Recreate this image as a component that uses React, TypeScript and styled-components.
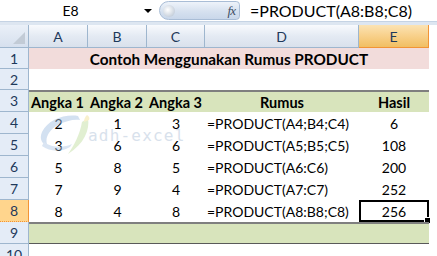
import * as React from 'react';
import styled, { createGlobalStyle, css } from 'styled-components';

const GlobalStyle = createGlobalStyle`
  html, body {
    margin: 0;
    padding: 0;
    background: #ffffff;
    overflow: hidden;
  }
  body {
    font-family: Lato, "Open Sans", sans-serif;
    font-size: 14px;
    color: #000;
  }
`;

const FONT = `Lato, "Open Sans", sans-serif`;

const Page = styled.div`
  width: 437px;
  height: 256px;
  position: relative;
  overflow: hidden;
  background: #ffffff;
`;

const FormulaBar = styled.div`
  display: flex;
  align-items: center;
  height: 21px;
  background: #ffffff;
`;

const NameBox = styled.div`
  position: relative;
  width: 159px;
  height: 21px;
  display: flex;
  align-items: center;
  justify-content: center;
  padding-right: 18px;
  box-sizing: border-box;
  font-family: ${FONT};
  font-size: 14px;
`;

const DropArrow = styled.span`
  position: absolute;
  right: 7px;
  top: 9px;
  width: 0;
  height: 0;
  border-left: 4px solid transparent;
  border-right: 4px solid transparent;
  border-top: 4px solid #000;
`;

const FxPill = styled.div`
  width: 81px;
  height: 19px;
  box-sizing: border-box;
  border: 1px solid #a9bdd6;
  border-radius: 10px 4px 4px 10px;
  background: linear-gradient(#eef3fa, #d6e1ef 55%, #c9d7ea);
  display: flex;
  align-items: center;
  justify-content: space-between;
  padding: 0 4px 0 3px;
`;

const Knob = styled.span`
  width: 12px;
  height: 12px;
  border-radius: 50%;
  background: radial-gradient(circle at 40% 40%, #ffffff, #c9d2dd 70%, #aeb9c7);
`;

const Fx = styled.span`
  font-family: "Liberation Serif", serif;
  font-style: italic;
  font-size: 13px;
  color: #3d4d63;
  letter-spacing: -1px;
`;

const FormulaText = styled.div`
  flex: 1;
  padding-left: 10px;
  font-family: ${FONT};
  font-size: 16px;
`;

const Band = styled.div`
  height: 4px;
  background: #dde6f1;
  border-top: 1px solid #c5d3e4;
  box-sizing: border-box;
`;

const Row = styled.div<{ $h: number }>`
  display: grid;
  grid-template-columns: 29px 400px 1fr;
  height: ${p => p.$h}px;
`;

const Corner = styled.div`
  position: relative;
  background: linear-gradient(#eaf0f8, #d6e0ee);
  border-right: 1px solid #9eb6ce;
  border-bottom: 1px solid #9eb6ce;
  box-sizing: border-box;
  &::after {
    content: '';
    position: absolute;
    right: 3px;
    bottom: 3px;
    width: 0;
    height: 0;
    border-left: 12px solid transparent;
    border-bottom: 12px solid #c2cbd6;
  }
`;

const Cols = styled.div<{ $fill?: string; $top?: string; $bottom?: string }>`
  display: grid;
  grid-template-columns: 59px 59px 58px 154px 70px;
  background: ${p => p.$fill || '#ffffff'};
  box-sizing: border-box;
  ${p => p.$top && css`border-top: ${p.$top};`}
  ${p => p.$bottom && css`border-bottom: ${p.$bottom};`}
  position: relative;
`;

const ColHead = styled.div<{ $sel?: boolean }>`
  display: flex;
  align-items: center;
  justify-content: center;
  font-family: ${FONT};
  font-size: 14px;
  color: #1e395b;
  box-sizing: border-box;
  border-right: 1px solid #9eb6ce;
  border-bottom: 1px solid #9eb6ce;
  background: linear-gradient(#f8fafd, #e4eaf3 50%, #d9e1ec);
  ${p => p.$sel && css`
    background: linear-gradient(#fbe3b4, #f8d08a 50%, #f1bf63);
    border-right: 1px solid #f29436;
    border-bottom: 1px solid #f29436;
  `}
`;

const RowHead = styled.div<{ $sel?: boolean }>`
  display: flex;
  align-items: center;
  justify-content: center;
  font-family: ${FONT};
  font-size: 14px;
  color: #1e395b;
  background: #e4ecf7;
  border-right: 1px solid #9eb6ce;
  border-bottom: 1px solid #9eb6ce;
  box-sizing: border-box;
  ${p => p.$sel && css`
    background: #ffd58d;
    border-right: 1px solid #f29436;
    border-bottom: 1px dotted #f29436;
  `}
`;

const Filler = styled.div`
  background: #ffffff;
`;

const Cell = styled.div<{ $align?: 'left' | 'center'; $bold?: boolean; $sel?: boolean }>`
  display: flex;
  align-items: center;
  justify-content: ${p => (p.$align === 'left' ? 'flex-start' : 'center')};
  padding-left: ${p => (p.$align === 'left' ? '2px' : '0')};
  font-family: ${FONT};
  font-size: ${p => (p.$bold ? '14.5px' : '14px')};
  font-weight: ${p => (p.$bold ? 700 : 400)};
  white-space: nowrap;
  box-sizing: border-box;
  position: relative;
  ${p => p.$sel && css`
    border: 2px solid #000;
    &::after {
      content: '';
      position: absolute;
      right: -4px;
      bottom: -4px;
      width: 5px;
      height: 5px;
      background: #000;
      border: 1px solid #fff;
    }
  `}
`;

const Title = styled.div`
  grid-column: 1 / 6;
  display: flex;
  align-items: center;
  justify-content: center;
  font-family: ${FONT};
  font-size: 15.3px;
  font-weight: 700;
`;

// faded "adh-excel" logo lying over rows 4-5
const Watermark = styled.div`
  position: absolute;
  left: 34px;
  top: 112px;
  display: flex;
  align-items: flex-end;
  pointer-events: none;
  opacity: 0.5;
`;

const MarkText = styled.span`
  font-family: "DejaVu Sans Mono", monospace;
  font-size: 16px;
  letter-spacing: 1.2px;
  color: #b3c5da;
  margin-left: -8px;
  margin-bottom: 13px;
`;

const data = [
  { n: 4, a: 2, b: 1, c: 3, f: '=PRODUCT(A4;B4;C4)', r: 6 },
  { n: 5, a: 3, b: 6, c: 6, f: '=PRODUCT(A5;B5;C5)', r: 108 },
  { n: 6, a: 5, b: 8, c: 5, f: '=PRODUCT(A6:C6)', r: 200 },
  { n: 7, a: 7, b: 9, c: 4, f: '=PRODUCT(A7:C7)', r: 252 },
  { n: 8, a: 8, b: 4, c: 8, f: '=PRODUCT(A8:B8;C8)', r: 256 },
];

export default function App() {
  return (
    <Page>
      <GlobalStyle />
      <FormulaBar>
        <NameBox>
          E8
          <DropArrow />
        </NameBox>
        <FxPill>
          <Knob />
          <Fx>fx</Fx>
        </FxPill>
        <FormulaText>=PRODUCT(A8:B8;C8)</FormulaText>
      </FormulaBar>
      <Band />
      <Row $h={23}>
        <Corner />
        <Cols>
          {['A', 'B', 'C', 'D', 'E'].map(c => (
            <ColHead key={c} $sel={c === 'E'}>{c}</ColHead>
          ))}
        </Cols>
        <Filler />
      </Row>
      <Row $h={21}>
        <RowHead>1</RowHead>
        <Cols $fill="#f2dcdb">
          <Title>Contoh Menggunakan Rumus PRODUCT</Title>
        </Cols>
        <Filler />
      </Row>
      <Row $h={21}>
        <RowHead>2</RowHead>
        <Cols />
        <Filler />
      </Row>
      <Row $h={22}>
        <RowHead>3</RowHead>
        <Cols $fill="#d8e4bc" $top="2px solid #7f7f7f">
          <Cell $align="left" $bold>Angka 1</Cell>
          <Cell $align="left" $bold>Angka 2</Cell>
          <Cell $align="left" $bold>Angka 3</Cell>
          <Cell $bold>Rumus</Cell>
          <Cell $bold>Hasil</Cell>
        </Cols>
        <Filler />
      </Row>
      {data.map(d => (
        <Row $h={22} key={d.n}>
          <RowHead $sel={d.n === 8}>{d.n}</RowHead>
          <Cols>
            <Cell>{d.a}</Cell>
            <Cell>{d.b}</Cell>
            <Cell>{d.c}</Cell>
            <Cell $align="left">{d.f}</Cell>
            <Cell $sel={d.n === 8}>{d.r}</Cell>
          </Cols>
          <Filler />
        </Row>
      ))}
      <Row $h={22}>
        <RowHead>9</RowHead>
        <Cols $fill="#d8e4bc" $top="2px solid #7f7f7f" $bottom="1px solid #595959" />
        <Filler />
      </Row>
      <Row $h={22}>
        <RowHead>10</RowHead>
        <Cols />
        <Filler />
      </Row>
      <Watermark>
        <svg width="62" height="46" viewBox="0 0 62 46">
          <path d="M44 4 C30 2 14 8 8 20 C5 27 8 32 14 34 C10 28 14 18 24 13 C31 9 40 7 46 8 Z" fill="#a9c4e4" />
          <path d="M10 30 C18 36 30 36 38 32 L36 35 C28 40 16 40 8 34 Z" fill="#b6cde8" />
          <path d="M54 6 C56 18 50 32 34 42 C40 34 46 22 48 10 Z" fill="#c5e0a5" />
          <path d="M53 3 C55 4 56 6 55 8 L50 10 C50 7 51 5 53 3 Z" fill="#f2e39a" />
        </svg>
        <MarkText>adh-excel</MarkText>
      </Watermark>
    </Page>
  );
}
